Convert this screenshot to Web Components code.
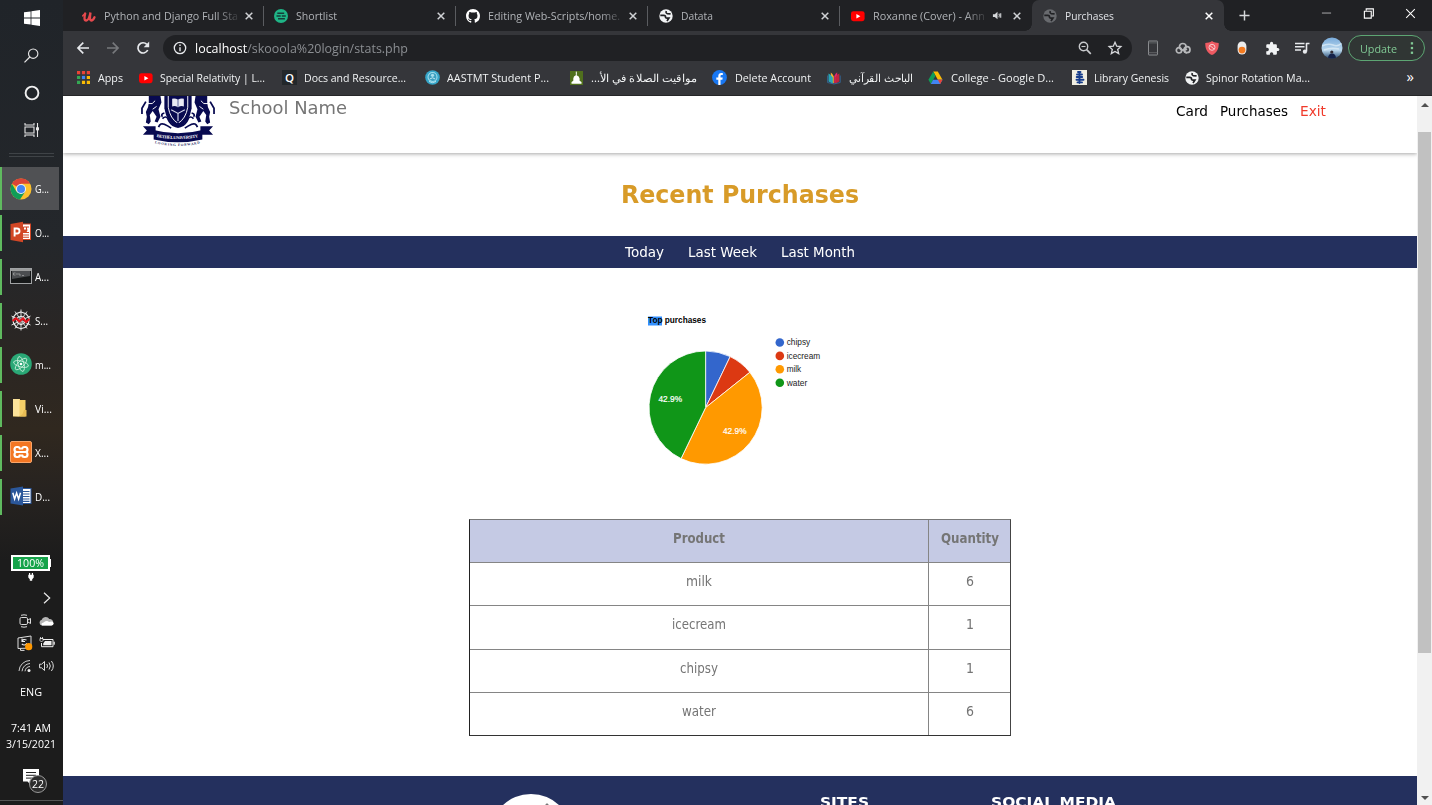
<!DOCTYPE html>
<html lang="en">
<head>
<meta charset="utf-8">
<title>Purchases</title>
<style>
html,body{margin:0;height:100%;overflow:hidden;background:#fff}
body{font-family:"Open Sans","Noto Sans",sans-serif;font-size:11px}
</style>
</head>
<body>
<desk-top></desk-top>
<script>
const globe = c => `<circle cx="7" cy="7" r="6.7" fill="${c}"/><path d="M1.300 6.300h3.500q1.900.2 1.700 1.600t1.900 1.200h1.500l-1.900 2.900" fill="none" stroke="#202124" stroke-width="1.700"/><path d="M7.300 2q-.8 2.200 1 2.600l3.300.3" fill="none" stroke="#202124" stroke-width="1.600"/>`;
const ICONS = {
  udemy:['0 0 14 14','<path d="M3.200 4.500C2.200 8 2 11.500 4.200 11.500S7.600 8 8.500 3.500C8 7 7.400 11.500 9.200 11.500c1.500 0 2.500-1.500 3.300-3.300" fill="none" stroke="#e5494d" stroke-width="2.300" stroke-linecap="round"/><path d="M.8 6.800 3 4.500" stroke="#e5494d" stroke-width="1.600" stroke-linecap="round"/>'],
  shortlist:['0 0 14 14','<circle cx="7" cy="7" r="7" fill="#1fb486"/><path d="M3.300 4.300h6.900M2.500 7h4.200M7.800 7h4M4 9.700h6.900" stroke="#153c38" stroke-width="1.500"/>'],
  github:['0 0 16 16','<path fill="#fff" d="M8 0C3.580 0 0 3.580 0 8c0 3.540 2.290 6.530 5.470 7.590.4.070.55-.17.55-.38 0-.19-.01-.82-.01-1.490-2.010.37-2.530-.49-2.690-.94-.09-.23-.48-.94-.82-1.130-.28-.15-.68-.52-.01-.53.63-.01 1.080.58 1.230.82.72 1.210 1.870.87 2.330.66.070-.52.28-.87.51-1.070-1.780-.2-3.640-.89-3.640-3.950 0-.87.31-1.590.82-2.150-.08-.2-.36-1.020.08-2.120 0 0 .67-.21 2.200.82.64-.18 1.320-.27 2-.27s1.360.090 2 .27c1.530-1.040 2.200-.82 2.200-.82.44 1.100.16 1.920.08 2.120.51.56.82 1.270.82 2.150 0 3.070-1.870 3.750-3.650 3.950.29.25.54.73.54 1.480 0 1.070-.01 1.930-.01 2.200 0 .21.15.46.55.38A8.010 8.010 0 0 0 16 8c0-4.420-3.580-8-8-8z"/>'],
  globe:['0 0 14 14',globe('#f1f3f4')],
  globedim:['0 0 14 14',globe('#686a6e')],
  youtube:['0 0 14 14','<rect x="0" y="2.200" width="13.600" height="10" rx="2.400" fill="#f00"/><path d="M5.400 5v4.400l4-2.200z" fill="#fff"/>'],
  x:['0 0 10 10','<path d="M1.700 1.700l6.600 6.600M8.300 1.700L1.700 8.300" stroke="currentColor" stroke-width="1.500"/>'],
  xthin:['0 0 12 12','<path d="M1.300 1.300l9.400 9.400M10.700 1.300L1.300 10.700" stroke="#fff" stroke-width="1.100"/>'],
  min:['0 0 12 12','<path d="M1 5.500h10" stroke="#b5b6b8" stroke-width="1"/>'],
  restore:['0 0 12 12','<path d="M1.500 3.500h7.500v7.500h-7.500z" fill="none" stroke="#fff" stroke-width="1.200"/><path d="M3.500 3v-2h7.800v7.800h-2" fill="none" stroke="#fff" stroke-width="1.200"/>'],
  plus:['0 0 12 12','<path d="M6 .5v11M.5 6h11" stroke="#d5d7da" stroke-width="1.600"/>'],
  speaker:['0 0 12 12','<path d="M1 4.500h2L6 2v8L3 7.500H1z" fill="#d5d7da"/><path d="M7.500 4q1.300 2 0 4M9.500 3.500v5" stroke="#d5d7da" stroke-width="1.200" fill="none"/>'],
  back:['0 0 14 14','<path d="M13 7H2M7.300 1.600 1.900 7l5.400 5.400" fill="none" stroke="#e8eaed" stroke-width="1.600"/>'],
  fwd:['0 0 14 14','<path d="M1 7h11M6.700 1.600 12.100 7l-5.400 5.400" fill="none" stroke="#77797c" stroke-width="1.600"/>'],
  reload:['0 0 14 14','<path d="M11.700 9A5.100 5.100 0 1 1 10.800 3.400" fill="none" stroke="#e8eaed" stroke-width="1.700"/><path d="M13.200.6v5.600H7.700z" fill="#e8eaed"/>'],
  info:['0 0 14 14','<circle cx="7" cy="7" r="5.700" fill="none" stroke="#e8eaed" stroke-width="1.300"/><path d="M7 6.200v4M7 3.600v1.500" stroke="#e8eaed" stroke-width="1.400"/>'],
  zoomout:['0 0 14 14','<circle cx="5.500" cy="5.500" r="4.200" fill="none" stroke="#c8cacd" stroke-width="1.400"/><path d="M3.500 5.500h4" stroke="#c8cacd" stroke-width="1.100"/><path d="M8.600 8.600l4.200 4.200" stroke="#c8cacd" stroke-width="1.700"/>'],
  star:['0 0 14 14','<path d="M7 1.300l1.700 3.900 4.200.4-3.200 2.800 1 4.200L7 10.400l-3.700 2.200 1-4.200L1.100 5.600l4.200-.4z" fill="none" stroke="#d5d7da" stroke-width="1.300"/>'],
  phone:['0 0 14 16','<rect x="2.500" y="1" width="9" height="14" rx=".4" fill="none" stroke="#8b8d90" stroke-width="1"/><path d="M2.500 2.900h9M2.500 12.700h9" stroke="#6b6d70" stroke-width=".8"/>'],
  cloud:['0 0 16 14','<g fill="none" stroke="#b7b8ba" stroke-width="1.700"><circle cx="4" cy="9.300" r="2.700"/><circle cx="7.800" cy="5.800" r="3.300"/><circle cx="12" cy="8.700" r="3"/><path d="M12 8.700q-1.500-1-2.200.8t2.200 2.500"/></g>'],
  shield:['0 0 14 14','<path d="M7 0C5 1.500 2.500 1.600.3 1.900.1 7.500 2 11.800 7 14c5-2.200 6.900-6.500 6.700-12.100C11.500 1.600 9 1.500 7 0z" fill="#ee5a62"/><circle cx="7" cy="6.300" r="3" fill="none" stroke="#f9c9cc" stroke-width="1"/><path d="M5 4.700l4 3.200" stroke="#f9c9cc"/>'],
  pill:['0 0 10 14','<rect x=".6" y=".5" width="8.800" height="13" rx="4.400" fill="#ececec"/><circle cx="5" cy="9.100" r="3.400" fill="#f47b20"/>'],
  puzzle:['0 0 24 24','<path fill="#f1f3f4" d="M20.500 11H19V7c0-1.100-.9-2-2-2h-4V3.500a2.500 2.500 0 0 0-5 0V5H4c-1.100 0-2 .9-2 2v3.800h1.500a2.700 2.700 0 0 1 0 5.400H2V20c0 1.100.9 2 2 2h3.800v-1.500a2.700 2.700 0 0 1 5.400 0V22H17c1.100 0 2-.9 2-2v-4h1.500a2.500 2.500 0 0 0 0-5z"/>'],
  queue:['0 0 16 14','<path d="M1 2.500h9.500M1 5.700h9.500M1 8.900h6" stroke="#e8eaed" stroke-width="1.500"/><path d="M12.200 2.500h3.300M12.500 2v8.500" stroke="#e8eaed" stroke-width="1.600"/><circle cx="10.900" cy="10.700" r="2.100" fill="#e8eaed"/>'],
  avatar:['0 0 22 22','<defs><clipPath id="c"><circle cx="11" cy="11" r="10.500"/></clipPath><linearGradient id="g" x2="0" y2="1"><stop offset="0" stop-color="#76a9da"/><stop offset=".6" stop-color="#bcd9ee"/><stop offset=".75" stop-color="#7fa0bd"/><stop offset="1" stop-color="#24446b"/></linearGradient></defs><g clip-path="url(#c)"><rect width="22" height="22" fill="url(#g)"/><path d="M1 9q6-3 11-1t9-2M3 13q7-3 15-1" stroke="#e2eff8" stroke-width="1.500" fill="none" opacity=".7"/><path d="M7 22q0-5.500 4-5.500t4 5.500" fill="#15234a"/><circle cx="10.800" cy="15" r="1.600" fill="#332d35"/></g>'],
  dots:['0 0 4 14','<g fill="#81c995"><rect x=".8" y="1.200" width="2.300" height="2.300"/><rect x=".8" y="5.900" width="2.300" height="2.300"/><rect x=".8" y="10.600" width="2.300" height="2.300"/></g>'],
  apps:['0 0 13 13','<path fill="#ea4335" d="M0 0h3.200v3.200H0zM4.900 0h3.200v3.200H4.900zM9.800 0H13v3.200H9.800z"/><path fill="#34a853" d="M0 4.900h3.200v3.200H0zM0 9.800h3.200V13H0z"/><path fill="#4285f4" d="M4.900 4.900h3.200v3.200H4.900z"/><path fill="#fbbc05" d="M9.800 4.900H13v3.200H9.800zM4.900 9.800h3.200V13H4.900zM9.800 9.800H13V13H9.800z"/>'],
  q:['0 0 15 15','<rect width="15" height="15" fill="#22272a"/><text x="7.500" y="11.500" text-anchor="middle" font-family="Open Sans" font-weight="600" font-size="11.500" fill="#fff">Q</text>'],
  aast:['0 0 15 15','<circle cx="7.500" cy="7.500" r="7.300" fill="#35a5c8"/><circle cx="7.500" cy="7" r="4.500" fill="#3b9fc0" stroke="#9fdcec" stroke-width="1.100"/><circle cx="7.500" cy="5.300" r="1.600" fill="#a6deec"/><path d="M4.800 9q2.700-2.500 5.400 0M4 11.500q3.500 2.300 7 0" stroke="#bfe8f2" fill="none"/>'],
  mosque:['0 0 13 14','<rect width="13" height="14" fill="#50701d"/><path d="M1.500 12.800h10V11L9.600 9.800V7.500q-.3-2.200-3-3.300L6.300 2l-.5 2.200Q3.400 5.300 3.300 7.500v2.300L1.500 11z" fill="#fff"/><path d="M6.300.6v3" stroke="#fff"/>'],
  fb:['0 0 15 15','<circle cx="7.500" cy="7.500" r="7.400" fill="#1877f2"/><path fill="#fff" d="M6.300 15V9.700H4.300V7.500h2V5.900c0-2 1.200-3 2.900-3l1.600.1v2H9.700c-1 0-1.200.5-1.200 1.200v1.300h2.200l-.3 2.200H8.500V15z"/>'],
  quran:['0 0 14 14','<path d="M6.800 12.500V5.500Q5.500 2.500 3.800 1.500v9z" fill="#f4b22c"/><path d="M5.800 12.800V6.500Q3.500 2.800 1.500 2.500v8z" fill="#26a7b8"/><path d="M7.300 12.500V5Q8.500 2.500 10.200 1.200v9.300z" fill="#e4246d"/><path d="M8.300 12.800V6.500Q10 3 12.400 2.500v8z" fill="#c3233c"/><path d="M.6 4.500v7L6.900 13l6.300-1.500v-7" fill="none" stroke="#3270a8" stroke-width=".8"/>'],
  drive:['0 0 15 14','<path d="M5.200.6h4.600l4.700 8.200H9.900z" fill="#fbbc04"/><path d="M5.200.6 7.500 4.700 2.800 12.900.4 8.800z" fill="#0f9d58"/><path d="M5.100 8.800h9.400l-2.300 4.100H2.800z" fill="#4285f4"/><path d="M9.900 8.800h4.600l-2.300 4.100z" fill="#ea4335"/>'],
  lib:['0 0 15 15','<rect width="15" height="15" fill="#f0eee2"/><path d="M6 2h2.500M5 4.500h5M7.500 2v11M4.700 7h5.500M4.500 9.700h7M5.500 12.400h4.500" stroke="#173d8c" stroke-width="1.900" stroke-linecap="round"/>'],
  win:['0 0 16 16','<path fill="#fff" d="M0 2.300 6.600 1.400v6.200H0zM7.400 1.300 16 0v7.600H7.400zM0 8.400h6.600v6.200L0 13.700zM7.400 8.400H16V16l-8.600-1.300z"/>'],
  search:['0 0 16 16','<circle cx="9.800" cy="6" r="5" fill="none" stroke="#e6e6e6" stroke-width="1.200"/><path d="M6.200 9.600.5 15.400" stroke="#e6e6e6" stroke-width="1.300"/>'],
  cortana:['0 0 16 16','<circle cx="8" cy="8" r="6.400" fill="none" stroke="#f0f0f0" stroke-width="1.900"/>'],
  taskview:['0 0 16 14','<path d="M1 0v2h9V0M1 14v-2h9v2M1 4h9v6H1zM13.500 0v14" fill="none" stroke="#e8e8e8" stroke-width="1.100"/><rect x="12" y="4.300" width="3" height="3" fill="#e8e8e8"/>'],
  chrome:['0 0 22 22','<circle cx="11" cy="11" r="10.500" fill="#fbc02d"/><path d="M11 11 1.900 5.750A10.500 10.500 0 0 1 20.100 5.750H11z" fill="#db4437"/><path d="M1.900 5.750A10.500 10.500 0 0 0 10 21.450L15.300 13.500 6.400 13.500z" fill="#0f9d58"/><circle cx="11" cy="11" r="5" fill="#f1f1f1"/><circle cx="11" cy="11" r="4" fill="#4285f4"/>'],
  ppt:['0 0 22 22','<rect x="10" y="3" width="10.500" height="15.500" fill="#fff" stroke="#d24726"/><path d="M14 6h5M16.500 6v3M13 11.500h6M13 14h6M13 16.300h6" fill="none" stroke="#d24726" stroke-width="1.100"/><path d="M14 5.500a3 3 0 1 0 3.500 3H14z" fill="#d24726"/><path d="M.5 3 13 .7v20.600L.5 19z" fill="#d24726"/><path d="M4.600 15.500v-8H7a2.300 2.300 0 0 1 0 5H4.600" fill="none" stroke="#fff" stroke-width="1.900"/>'],
  cmd:['0 0 22 16','<rect x=".5" y=".5" width="21" height="15" fill="#161819" stroke="#a0a2a4"/><path d="M1 2h20" stroke="#c9c9c9" stroke-width="1.500"/><path d="M2 3h18v5L2 11z" fill="#4b4d50"/><path d="M5.500 5H3.500v2h2M7 5v2M9 5v2h2M12 7.500h2" stroke="#ababab" stroke-width=".7" fill="none"/>'],
  spyder:['0 0 22 22','<path d="M11 .5v21M1.500 7l19 9M20.500 7l-19 9M5 2.500l12 17M17 2.500l-12 17" stroke="#d8d8d8" stroke-width="1"/><path d="M11 3l5 1.700 3 4-.4 5.500-3.100 4L11 19.700l-4.500-1.500-3-4L3 8.700l3-4zM11 7.300l3 1 1.500 3-1.500 3-3 1.200-3-1.200-1.500-3 1.500-3z" fill="none" stroke="#e8e8e8" stroke-width="1.200"/><path d="M2.500 12 6 9.300l3.500 3 3.500-2.800 3 3.500 3.500-3" fill="none" stroke="#e3131d" stroke-width="2.200"/>'],
  atom:['0 0 22 22','<circle cx="11" cy="11" r="10.800" fill="#2aa876"/><g fill="none" stroke="#c6ecd8" stroke-width=".9"><ellipse cx="11" cy="11" rx="7.600" ry="2.900" transform="rotate(15 11 11)"/><ellipse cx="11" cy="11" rx="7.600" ry="2.900" transform="rotate(75 11 11)"/><ellipse cx="11" cy="11" rx="7.600" ry="2.900" transform="rotate(135 11 11)"/></g><circle cx="11" cy="11" r="1.300" fill="#fff"/>'],
  folder:['0 0 22 22','<path d="M3 2h7v1h5.500v16.500H3z" fill="#f3cf68"/><path d="M3 2h6.500v17.500L3 19z" fill="#fbe29a"/><path d="M14 13h2.500v6.500h-7L12.500 17z" fill="#e8bd55"/>'],
  xampp:['0 0 22 22','<rect x=".5" y=".5" width="21" height="21" rx="1.500" fill="#f37623" stroke="#f9a66b"/><path d="M10 8.500Q10 6 7.700 6H6.800Q4.500 6 4.500 8.500T6.800 11h8.400q2.300 0 2.300 2.500T15.200 16h-.9Q12 16 12 13.500M6.800 11q-2.300 0-2.300 2.500T6.800 16h.9Q10 16 10 13.500M15.200 11q2.300 0 2.300-2.500T15.200 6h-.9Q12 6 12 8.500" fill="none" stroke="#fff" stroke-width="2.200"/>'],
  word:['0 0 22 20','<rect x="11" y="2.500" width="10" height="15" fill="#fff" stroke="#2b579a"/><path d="M13 5.500h6.500M13 8h6.500M13 10.500h6.500M13 13h6.500M13 15.300h6.500" stroke="#2b579a" stroke-width="1.200"/><path d="M.5 2.500 13 .5v19L.5 17.500z" fill="#2b579a"/><path d="M2.800 6.800 4.600 13 6.600 7l2 6 1.900-6.200" fill="none" stroke="#fff" stroke-width="1.500"/>'],
  plug:['0 0 6 8','<path d="M.3 1.800h5.400v2.700L4.200 6.300v1.500H1.800V6.300L.3 4.500zM1 0h1.200v2H1zM3.800 0H5v2H3.800z" fill="#fff"/>'],
  chev:['0 0 8 12','<path d="M1 .8 6.700 6 1 11.200" fill="none" stroke="#e8e8e8" stroke-width="1.200"/>'],
  meet:['0 0 14 14','<rect x="2" y="3.500" width="7.500" height="7" rx="1.300" fill="none" stroke="#ddd"/><path d="M10 6 12.500 4.500v5L10 8M3 1.300q3-1 6 0M3 12.700q3 1 6 0" fill="none" stroke="#ddd"/>'],
  onedrive:['0 0 16 10','<path d="M3 9.500a2.900 2.900 0 0 1-.2-5.700C3.800.2 9 0 10.200 3c4-.8 5.800 5.600 2.200 6.500z" fill="#b5b5b5"/><path d="M3 9.500Q1.500 7 4.500 6.500 8 4 10 6q4-1.500 4.700 1.500-.3 2-2.300 2z" fill="#fff"/>'],
  sync:['0 0 16 16','<path d="M1 3 14 1v12L1 13.500zM3.500 13.700v1.700h4" fill="none" stroke="#ddd"/><path d="M9.500 5Q6 3.500 5 6.500m0-3v3h3M4.800 9q3 2.200 5-.7" fill="none" stroke="#eee" stroke-width="1.100"/><circle cx="11.700" cy="11.700" r="3.600" fill="#ff9800"/>'],
  batt:['0 0 16 12','<path d="M4 2.500h10v7.200H2.500V6" fill="none" stroke="#eee"/><path d="M6 4h6.500v4.200H4.200V6.500z" fill="#eee"/><rect x="14.500" y="4.700" width="1.300" height="3" fill="#eee"/><path d="M1 1.500h3v2L2.500 5 1 3.500zM1.500 0v2M3.500 0v2" stroke="#eee" stroke-width=".8" fill="#1c1c1c"/>'],
  wifi:['0 0 14 14','<path d="M1 12A11 11 0 0 1 12 1.500M4 12.300A8.500 8.500 0 0 1 12 4.500M7 12.300A5.500 5.500 0 0 1 12 7.500" fill="none" stroke="#ccc" stroke-width="1"/><circle cx="11" cy="11.500" r="1.500" fill="#eee"/>'],
  vol:['0 0 16 12','<path d="M.6 4.200h2L5.500 1.500v9L2.600 7.800h-2zM7.800 4q1.400 2 0 4M10 2.500q2.700 3.500 0 7M12.400 1q3.800 5 0 10" fill="none" stroke="#ddd"/>'],
  note:['0 0 16 16','<path d="M0 0h16v12.500H8V16L4.500 12.500H0z" fill="#fff"/><path d="M3 3.500h10M3 6.300h10M3 9.100h6" stroke="#222" stroke-width="1"/>']
};
const fits = [];
const define = (name, css, html, after) => customElements.define(name, class extends HTMLElement {
  connectedCallback(){
    if (this.shadowRoot) return;
    const t = document.createElement('template');
    t.innerHTML = `<style>${css}</style>${typeof html === 'function' ? html(k => this.getAttribute(k) || '') : html}`;
    this.attachShadow({mode:'open'}).append(t.content.cloneNode(true));
    if (after) after(this);
  }
});

/* <fit-text w="…"> keeps its single line of text to a given measure. */
define('fit-text', ':host{display:inline-block;white-space:nowrap;flex:none}span{display:inline-block;transform-origin:0 50%}', '<span><slot></slot></span>', el => {
  fits.push(() => {
    const s = el.shadowRoot.querySelector('span'), w = +el.getAttribute('w'), n = s.getBoundingClientRect().width;
    el.style.width = w + 'px';
    s.style.transform = `scaleX(${w / n})`;
  });
});
define('ui-icon', ':host{display:block;flex:none}svg{display:block;overflow:visible}', a => {
  const [vb, body] = ICONS[a('name')], d = vb.split(' ');
  const w = +(a('w') || d[2]);
  return `<svg viewBox="${vb}" width="${w}" height="${w * d[3] / d[2]}">${body}</svg>`;
});

define('task-app', `:host{display:flex;height:44px;align-items:flex-start}
.b{width:2px;height:36px;margin-top:4px;background:#5fba5f}.c{flex:1;height:42px;display:flex;align-items:center;padding-left:8px;color:#fff}
.i{width:22px;display:flex;justify-content:center;margin-right:3px}
:host([active]) .b{height:43px;margin-top:0;width:2px}:host([active]) .c{height:43px;background:#505154;margin-right:4px}`,
a => `<div class="b"></div><div class="c"><div class="i"><ui-icon name="${a('icon')}" w="22"></ui-icon></div><fit-text w="${a('w') || 14}">${a('label')}</fit-text></div>`);

define('task-bar', `:host{display:flex;flex-direction:column;width:63px;flex:none;height:805px;color:#fff;background:linear-gradient(#202429,#24272b 240px,#2a2624 340px,#30281f 430px,#272320 490px,#1c1c1c 560px);overflow:hidden}
.top{height:144px;display:grid;grid-template-rows:36px 38px 38px 36px;justify-items:center;align-items:center}
.sep{height:2px;border:1px solid #3f4347;border-width:1px 0;margin:9px 9px 10px}
.tray{margin-top:35.500px;display:flex;flex-direction:column;align-items:center;margin-right:2px}
.bat{width:35px;height:12px;border:2px solid #fff;background:#16a34a;font-size:11px;line-height:12px;text-align:center;position:relative;margin-left:-1px}.bat:after{content:"";position:absolute;right:-3.500px;top:2px;width:2px;height:8px;background:#fff}
.pair{display:grid;grid-template-columns:22px 22px;justify-items:center;align-items:center;height:22.500px;margin-left:11px}
.t{line-height:16px;height:16px}.n{position:relative;width:61px;margin-top:17px;height:28px}.n ui-icon{margin-left:23px}
.bd{position:absolute;left:29px;top:6px;width:16px;height:16px;border:1px solid #999;border-radius:9px;background:#2d2d2d;font-size:11px;line-height:16px;text-align:center}
.end{height:1px;background:#555;margin:3px -2px 0 0;width:63px}`,
`<div class="top"><ui-icon name="win"></ui-icon><ui-icon name="search" w="15"></ui-icon><ui-icon name="cortana"></ui-icon><ui-icon name="taskview"></ui-icon></div><div class="sep"></div>
<task-app active icon="chrome" label="G..."></task-app><task-app icon="ppt" label="O..."></task-app><task-app icon="cmd" label="A..."></task-app><task-app icon="spyder" label="S..." w="13"></task-app><task-app icon="atom" label="m..." w="16"></task-app><task-app icon="folder" label="Vi..." w="17"></task-app><task-app icon="xampp" label="X..." w="14"></task-app><task-app icon="word" label="D..." w="15"></task-app>
<div class="tray"><div class="bat"><fit-text w="27">100%</fit-text></div><ui-icon name="plug" style="margin-top:2px"></ui-icon>
<div class="pair" style="height:35px;margin-top:0"><span></span><ui-icon name="chev"></ui-icon></div>
<div class="pair" style="margin-top:-6px"><ui-icon name="meet"></ui-icon><ui-icon name="onedrive"></ui-icon></div><div class="pair"><ui-icon name="sync"></ui-icon><ui-icon name="batt"></ui-icon></div><div class="pair"><ui-icon name="wifi"></ui-icon><ui-icon name="vol"></ui-icon></div>
<div class="t" style="margin-top:7px"><fit-text w="22">ENG</fit-text></div><div class="t" style="margin-top:20px"><fit-text w="40">7:41 AM</fit-text></div><div class="t"><fit-text w="50">3/15/2021</fit-text></div>
<div class="n"><ui-icon name="note"></ui-icon><div class="bd"><fit-text w="12">22</fit-text></div></div><div class="end"></div></div>`);

define('browser-tab', `:host{display:flex;width:192px;height:31px;flex:none;align-items:center;color:#b0b3b7;box-sizing:border-box;padding-left:10px;border-right:1px solid transparent}
:host([sep]){border-image:linear-gradient(transparent 7px,#5a5c60 7px 25px,transparent 25px) 1}
.i{width:14px;margin-right:8px}.t{width:134px;overflow:hidden;-webkit-mask:linear-gradient(90deg,#000 112px,transparent 138px)}fit-text{margin-top:-2px}
:host([audio]) .t{width:112px;-webkit-mask:linear-gradient(90deg,#000 92px,transparent 116px)}.s{width:22px;display:none}:host([audio]) .s{display:flex;padding-left:7px;box-sizing:border-box}
.x{margin-left:6px;color:#d0d2d5}
:host([nudge]){padding-left:11px}:host([nudge]) .x{margin-left:5px}
:host([active]){position:relative;background:#35363a;border-radius:7px 7px 0 0;color:#dfe1e5}:host([active]) .x{color:#fff}
:host([active]):before,:host([active]):after{content:"";position:absolute;bottom:0;width:7px;height:7px}
:host([active]):before{left:-7px;background:radial-gradient(circle at 0 0,transparent 6.500px,#35363a 7px)}:host([active]):after{right:-8px;background:radial-gradient(circle at 100% 0,transparent 6.500px,#35363a 7px)}`,
a => `<div class="i"><ui-icon name="${a('icon')}" w="14"></ui-icon></div><div class="t"><fit-text w="${a('w')}">${a('label')}</fit-text></div><div class="s"><ui-icon name="speaker" w="11"></ui-icon></div><ui-icon class="x" name="x" w="10"></ui-icon>`);

define('tab-strip', `:host{display:flex;height:31px;background:#202124;padding-left:9px}.plus{margin:10px 0 0 15px}.win{margin-left:auto;display:flex;gap:31px;padding:8px 16px 0 0}`,
`<browser-tab sep icon="udemy" w="134" label="Python and Django Full Sta"></browser-tab><browser-tab sep icon="shortlist" w="41" label="Shortlist"></browser-tab><browser-tab sep icon="github" w="132" label="Editing Web-Scripts/home."></browser-tab><browser-tab sep nudge icon="globe" w="32" label="Datata"></browser-tab><browser-tab audio nudge icon="youtube" w="112" label="Roxanne (Cover) - Ann"></browser-tab><browser-tab active nudge icon="globedim" w="49" label="Purchases"></browser-tab>
<ui-icon class="plus" name="plus" w="11"></ui-icon><div class="win"><ui-icon name="min" w="11"></ui-icon><ui-icon name="restore" w="11"></ui-icon><ui-icon name="xthin" w="11"></ui-icon></div>`);

define('tool-bar', `:host{display:flex;height:34px;align-items:center;background:#35363a}
.nav{display:flex;gap:16px;padding-left:13px;width:87px}.omni{width:969px;height:26px;border-radius:13px;background:#202124;display:flex;align-items:center;box-sizing:border-box;padding:0 10px 0 10px;font-size:13px;color:#8b8e92}
.omni>ui-icon{margin-right:8px}.omni b{font-weight:400;color:#fff}.r{margin-left:auto;display:flex;gap:16px}
.ext{display:grid;grid-template-columns:repeat(6,29.800px);justify-items:center;align-items:center;margin-left:6px;width:179px}
.up{width:77px;height:26px;box-sizing:border-box;border:1px solid #5da573;border-radius:13px;display:flex;align-items:center;padding-left:11px;color:#81c995;background:#303634;margin-left:5px}.up ui-icon{margin-left:13px}`,
`<div class="nav"><ui-icon name="back"></ui-icon><ui-icon name="fwd"></ui-icon><ui-icon name="reload"></ui-icon></div>
<div class="omni"><ui-icon name="info"></ui-icon><fit-text w="213"><b>localhost</b>/skooola%20login/stats.php</fit-text><div class="r"><ui-icon name="zoomout"></ui-icon><ui-icon name="star"></ui-icon></div></div>
<div class="ext"><ui-icon name="phone"></ui-icon><ui-icon name="cloud"></ui-icon><ui-icon name="shield"></ui-icon><ui-icon name="pill"></ui-icon><ui-icon name="puzzle" w="15"></ui-icon><ui-icon name="queue"></ui-icon></div>
<ui-icon name="avatar" style="margin-left:4px"></ui-icon><div class="up"><fit-text w="37">Update</fit-text><ui-icon name="dots"></ui-icon></div>`);

define('book-mark', ':host{display:flex;align-items:center;flex:none;color:#f1f3f4}', a => `<div style="width:${a('gap')}px"><ui-icon name="${a('icon')}"></ui-icon></div><fit-text w="${a('w')}"><slot></slot></fit-text>`, el => el.style.width = el.getAttribute('span') + 'px');

define('bookmarks-bar', ':host{display:flex;align-items:center;background:#35363a;padding:0 18px 3px 14px;border-bottom:1px solid #35363a;margin-top:-1px;height:27px}.m{margin-left:auto;color:#fff;font-size:15px;line-height:18px;margin-top:-3px}',
`<book-mark icon="apps" gap="21" w="25" span="62">Apps</book-mark><book-mark icon="youtube" gap="21" w="105" span="143">Special Relativity | L...</book-mark><book-mark icon="q" gap="22" w="102" span="143">Docs and Resource...</book-mark><book-mark icon="aast" gap="22" w="102" span="145">AASTMT Student P...</book-mark><book-mark icon="mosque" gap="21" w="106" span="142"><bdi dir="rtl">مواقيت الصلاة في الأ...</bdi></book-mark><book-mark icon="fb" gap="23" w="76" span="115">Delete Account</book-mark><book-mark icon="quran" gap="22" w="64" span="101">الباحث القرآني</book-mark><book-mark icon="drive" gap="23" w="103" span="144">College - Google D...</book-mark><book-mark icon="lib" gap="22" w="75" span="113">Library Genesis</book-mark><book-mark icon="globe" gap="21" w="104" span="130">Spinor Rotation Ma...</book-mark><span class="m">»</span>`);

define('school-crest', ':host{display:block;flex:none}svg{display:block}', `<svg width="74" height="51" viewBox="0 0 76 54" preserveAspectRatio="none"><g fill="#080a50">
<path d="M24 0h28v13q-2 15-14 21Q26 28 24 13z"/><path d="M8 0h12l1 7-3 7 2 8-3 6-3-1 2-5-4-6-3 4 1 7-2 3-3-2 1-6-1-5q3-5 3-10z"/><path d="M68 0H56l-1 7 3 7-2 8 3 6 3-1-2-5 4-6 3 4-1 7 2 3 3-2-1-6 1-5q-3-5-3-10z"/>
<path d="M2 32h13v9H2l4-4.500zM74 32H61v9h13l-4-4.500z"/><path d="M13 36q25 7 50 0v10q-25 6-50 0z"/></g>
<path d="M28 0v12q2 12 10 17 8-5 10-17V0" fill="none" stroke="#fff" stroke-width="1"/><path d="M32 3q3-1 6 1 3-2 6-1v8q-3-1-6 1-3-2-6-1z" fill="#e9eaf5"/><path d="M38 4v8" stroke="#59609a" stroke-width="1" fill="none"/><path d="M31 14.500l7 4 7-4M38 18.500v8" stroke="#d5d7ea" stroke-width="1.200" fill="none"/>
<path d="M5.500 8h6l3-3M70.500 8h-6l-3-3M12 14l4-3M64 14l-4-3" stroke="#fff" fill="none"/>
<g fill="none" stroke="#080a50" stroke-width="1.800"><path d="M22 24q4-4 6 1t7 7 3-4M54 24q-4-4-6 1t-7 7-3-4M18 33q2-5 6-3t7 4M58 33q-2-5-6-3t-7 4M24 18q-4 1-2 4M52 18q4 1 2 4M5 6l-4 7v6M71 6l4 7v6"/></g>
<path id="a" d="M16 43.500q22 4 44 0" fill="none"/><path id="b" d="M14 50q24 6 48 0" fill="none"/><text font-family="Liberation Serif,serif" font-weight="bold" font-size="4.600" fill="#fff"><textPath href="#a" textLength="43">BETHEL UNIVERSITY</textPath></text><text font-family="Liberation Serif,serif" font-weight="bold" font-size="3.600" fill="#2b2d68"><textPath href="#b" textLength="47">LOOKING FORWARD</textPath></text></svg>`);

define('page-header', `:host{display:flex;height:57px;background:#fff;box-shadow:0 1px 4px rgba(0,0,0,.35);position:relative;padding:0 91px 0 78px;box-sizing:border-box;flex:none;overflow:visible;clip-path:inset(0 0 -8px 0)}
.n{margin:0 0 0 14px;font-size:18.500px;line-height:24px;color:#757575}.l{margin-left:auto;display:flex;gap:12px;font-size:13.500px;line-height:30px;color:#000}.e{color:#f03a2b}`,
`<school-crest></school-crest><div class="n"><fit-text w="118">School Name</fit-text></div><nav class="l"><fit-text w="32">Card</fit-text><fit-text w="68">Purchases</fit-text><fit-text w="26" class="e">Exit</fit-text></nav>`);
define('period-nav', `:host{display:flex;height:32px;background:#24305e;justify-content:center;gap:24px;font-size:13.500px;line-height:33px;color:#fff;flex:none}`,
`<fit-text w="39">Today</fit-text><fit-text w="69">Last Week</fit-text><fit-text w="74">Last Month</fit-text>`);

define('pie-chart', ':host{display:block;width:230px;height:170px}svg{display:block}text{font-family:"Liberation Sans",Arial,sans-serif;font-size:8.200px}', () => {
  const cx = 75.600, cy = 97.600, r = 56.600, p = f => `${cx + r * Math.sin(f * 2 * Math.PI)} ${cy - r * Math.cos(f * 2 * Math.PI)}`;
  const data = [['chipsy',1,'#3366cc',23.500],['icecream',1,'#dc3912',33.500],['milk',6,'#ff9900',14.500],['water',6,'#109618',20.500]];
  let at = 0, s = '', l = '';
  data.forEach(([n, v, c, w], i) => {
    const e = at + v / 14;
    s += `<path d="M${cx} ${cy}L${p(at)}A${r} ${r} 0 0 1 ${p(e)}Z" fill="${c}" stroke="#fff" stroke-width=".8"/>`;
    l += `<circle cx="149.800" cy="${32.500 + i * 13.400}" r="4.300" fill="${c}"/><text x="156.700" y="${35.300 + i * 13.400}" textLength="${w}" lengthAdjust="spacingAndGlyphs" fill="#222">${n}</text>`;
    at = e;
  });
  return `<svg width="230" height="170"><rect x="18" y="6.500" width="14" height="9" fill="#3390ff"/><text x="18" y="13.400" font-weight="bold" textLength="58" lengthAdjust="spacingAndGlyphs">Top purchases</text>${s}${l}<text x="28.500" y="92.400" fill="#fff" stroke="#fff" stroke-width=".2" textLength="23.500" lengthAdjust="spacingAndGlyphs">42.9%</text><text x="93" y="124" fill="#fff" stroke="#fff" stroke-width=".2" textLength="23.500" lengthAdjust="spacingAndGlyphs">42.9%</text></svg>`;
});

define('purchase-table', `:host{display:grid;grid-template-columns:458px 81px;grid-template-rows:repeat(5,42.200px);gap:1px;background:#858585;border:1px solid #777;border-left-color:#222;border-bottom-color:#333;border-right-color:#444;color:#757575;font-size:13.500px;width:542px;box-sizing:border-box;height:217px}
div{background:#fff;text-align:center;line-height:37px}.h{background:#c5cae4;font-weight:bold}`,
() => `<div class="h"><fit-text w="52">Product</fit-text></div><div class="h"><fit-text w="58">Quantity</fit-text></div>` + [['milk',6,26],['icecream',1,54],['chipsy',1,38],['water',6,34]].map(([n, q, w]) => `<div><fit-text w="${w}">${n}</fit-text></div><div><fit-text w="8">${q}</fit-text></div>`).join(''));

define('page-footer', `:host{display:flex;height:29px;background:#24305e;color:#fff;overflow:hidden;font-size:13.500px;font-weight:bold;flex:none;box-sizing:border-box;padding:18px 0 0 427px}
.o{width:82px;height:82px;border-radius:50%;background:radial-gradient(circle at 57px 11px,#777 0 1px,#fff 2px);flex:none}.a{margin-left:248px}.b{margin-left:122px}fit-text{line-height:17px;height:17px}`,
`<div class="o"></div><fit-text class="a" w="49">SITES</fit-text><fit-text class="b" w="125">SOCIAL MEDIA</fit-text>`);

define('scroll-rail', `:host{display:flex;flex-direction:column;width:15px;background:#f1f1f1;align-items:center}.t{width:13px;height:521px;background:#c1c1c1}i{width:0;height:0;border:4px solid transparent}.u{border-bottom-color:#505050;border-top:0;margin:7px 0 25px}.d{border-top-color:#505050;border-bottom:0;margin:auto 0 5px}`,
'<i class="u"></i><div class="t"></div><i class="d"></i>');

define('site-page', `:host{display:flex;flex:1;min-height:0;font-family:"DejaVu Sans",Verdana,sans-serif;background:#fff;border-top:1px solid #252628}main{flex:1;display:flex;flex-direction:column;align-items:stretch;min-width:0}
h1{margin:0;height:83px;line-height:83px;font-size:25px;text-align:center;color:#d89b28;flex:none}pie-chart{margin:42px 0 39px 567px}purchase-table{margin:0 0 40px 406px}`,
`<main><page-header></page-header><h1><fit-text w="238">Recent Purchases</fit-text></h1><period-nav></period-nav><pie-chart></pie-chart><purchase-table></purchase-table><page-footer></page-footer></main><scroll-rail></scroll-rail>`);

define('desk-top', ':host{display:flex;width:1432px;height:805px;overflow:hidden}.w{flex:1;display:flex;flex-direction:column;min-width:0}tab-strip,tool-bar,bookmarks-bar{flex:none}',
'<task-bar></task-bar><div class="w"><tab-strip></tab-strip><tool-bar></tool-bar><bookmarks-bar></bookmarks-bar><site-page></site-page></div>');
fits.forEach(f => f());
</script>
</body>
</html>
